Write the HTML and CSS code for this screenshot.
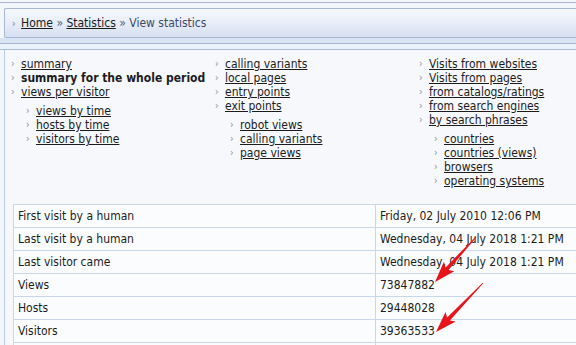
FILE: index.html
```html
<!DOCTYPE html>
<html lang="en">
<head>
    <meta charset="UTF-8">
    <title>View statistics</title>
    <link rel="stylesheet" href="styles.css">
</head>
<body>
    <div class="frame-top"></div>
    <div class="crumbs">
        <span class="crumb-mark">&rsaquo;</span>
        <a href="#">Home</a> <span class="sep">&raquo;</span>
        <a href="#">Statistics</a> <span class="sep">&raquo;</span>
        <span class="current">View statistics</span>
    </div>
    <div class="band"></div>
    <div class="band band-light"></div>

    <div class="panel">
        <div class="menu">
            <ul class="col">
                <li><a href="#">summary</a></li>
                <li><b>summary for the whole period</b></li>
                <li><a href="#">views per visitor</a></li>
                <li class="sub-wrap">
                    <ul class="sub">
                        <li><a href="#">views by time</a></li>
                        <li><a href="#">hosts by time</a></li>
                        <li><a href="#">visitors by time</a></li>
                    </ul>
                </li>
            </ul>
            <ul class="col">
                <li><a href="#">calling variants</a></li>
                <li><a href="#">local pages</a></li>
                <li><a href="#">entry points</a></li>
                <li><a href="#">exit points</a></li>
                <li class="sub-wrap">
                    <ul class="sub">
                        <li><a href="#">robot views</a></li>
                        <li><a href="#">calling variants</a></li>
                        <li><a href="#">page views</a></li>
                    </ul>
                </li>
            </ul>
            <ul class="col">
                <li><a href="#">Visits from websites</a></li>
                <li><a href="#">Visits from pages</a></li>
                <li><a href="#">from catalogs/ratings</a></li>
                <li><a href="#">from search engines</a></li>
                <li><a href="#">by search phrases</a></li>
                <li class="sub-wrap">
                    <ul class="sub">
                        <li><a href="#">countries</a></li>
                        <li><a href="#">countries (views)</a></li>
                        <li><a href="#">browsers</a></li>
                        <li><a href="#">operating systems</a></li>
                    </ul>
                </li>
            </ul>
        </div>

        <table class="stats">
            <tr><td class="name">First visit by a human</td><td>Friday, 02 July 2010 12:06 PM</td></tr>
            <tr><td class="name">Last visit by a human</td><td>Wednesday, 04 July 2018 1:21 PM</td></tr>
            <tr><td class="name">Last visitor came</td><td>Wednesday, 04 July 2018 1:21 PM</td></tr>
            <tr><td class="name">Views</td><td>73847882</td></tr>
            <tr><td class="name">Hosts</td><td>29448028</td></tr>
            <tr><td class="name">Visitors</td><td>39363533</td></tr>
            <tr><td class="name">&nbsp;</td><td>&nbsp;</td></tr>
        </table>
    </div>

    <!-- red arrows drawn over the numbers -->
    <svg class="arrows" width="576" height="345" viewBox="0 0 576 345">
        <polygon points="475.6,236.7 476.4,237.3 448.6,270 454.3,271.2 435,282 443.9,261.8 445.6,267.4" />
        <polygon points="482.7,282.7 483.3,283.3 449.9,320.4 455.7,321.6 436,332 445.5,312 447.1,317.6" />
    </svg>
</body>
</html>
```

FILE: styles.css
```css
body {
    margin: 0;
    background: #f3f6fa;
    font-family: "DejaVu Sans Condensed", "DejaVu Sans", sans-serif;
    font-size: 12px;
    color: #1c1c1c;
    position: relative;
    height: 345px;
    overflow: hidden;
}

a {
    color: #1c1c1c;
}

.frame-top {
    margin-top: 2px;
    height: 1px;
    background: #aab4cc;
    margin-bottom: 5px;
}

/* breadcrumb bar */
.crumbs {
    margin-left: 4px;
    height: 28px;
    line-height: 28px;
    padding-left: 7px;
    border: 1px solid #a8b8d2;
    border-right: none;
    border-radius: 2px 0 0 2px;
    background: linear-gradient(to bottom, #f5f8fe, #e6ecf7 55%, #d6dff0);
    color: #3c4a6c;
}

.crumb-mark {
    color: #6a7a98;
    font-size: 10px;
    margin-right: 2px;
}

.sep {
    color: #56648a;
}

.current {
    color: #3c4a6c;
}

.band {
    height: 5px;
    background: #d8e4f3;
    border-bottom: 1px solid #a8b8d2;
}

.band-light {
    background: #ebf1f9;
    border-bottom-color: #aabed9;
}

/* main panel */
.panel {
    margin-left: 4px;
    border-left: 1px solid #b6cbe6;
    background: #f6f8fc;
    padding: 7px 0 0 5px;
    height: 288px;
    overflow: hidden;
}

.menu {
    display: flex;
}

.col,
.sub {
    list-style: none;
    margin: 0;
    padding: 0;
}

.col {
    flex: none;
    width: 204px;
}

.col li {
    line-height: 14px;
    padding-left: 11px;
    position: relative;
    white-space: nowrap;
}

.col li::before {
    content: "\203A";
    position: absolute;
    left: 1px;
    top: 0;
    color: #8c8c8c;
    font-size: 10px;
}

.col li.sub-wrap {
    padding-left: 15px;
}

.col li.sub-wrap::before {
    content: none;
}

.sub {
    margin-top: 5px;
}

/* stats table */
.stats {
    margin: 16px 0 0 3px;
    width: 580px;
    border-collapse: collapse;
    background: #fbfcfe;
}

.stats td {
    border: 1px solid #c8d8ea;
    height: 22px;
    padding: 0 0 0 4px;
    white-space: nowrap;
}

.stats td.name {
    width: 357px;
}

.arrows {
    position: absolute;
    left: 0;
    top: 0;
    fill: #e8141c;
}
```
